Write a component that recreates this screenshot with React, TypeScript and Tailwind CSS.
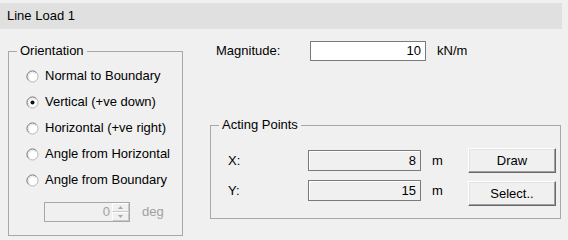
import { type ReactNode } from 'react';

const ORIENTATIONS = [
  'Normal to Boundary',
  'Vertical (+ve down)',
  'Horizontal (+ve right)',
  'Angle from Horizontal',
  'Angle from Boundary',
];

function Radio({ checked, label }: { checked?: boolean; label: string }) {
  return (
    <div className="flex h-[26px] items-center">
      <svg width="13" height="13" viewBox="0 0 13 13" className="ml-[17px] shrink-0">
        <circle cx="6.5" cy="6.5" r="5.5" fill="#ffffff" stroke="#b4b4b4" strokeWidth="1" />
        {/* darker shading on the upper-left half of the ring */}
        <path d="M2.6 10.4 A5.5 5.5 0 0 1 10.4 2.6" fill="none" stroke="#8a8a8a" strokeWidth="1" />
        <path d="M3.4 9.6 A4.4 4.4 0 0 1 9.6 3.4" fill="none" stroke="#e2e2e2" strokeWidth="1" />
        {checked && <circle cx="6.5" cy="6.5" r="2" fill="#111111" />}
      </svg>
      <span className="ml-[6px]">{label}</span>
    </div>
  );
}

function GroupBox({ title, className, children }: { title: string; className: string; children: ReactNode }) {
  return (
    <fieldset className={`border border-[#a8a8a8] ${className}`}>
      <legend className="ml-[8px] px-[3px] leading-[14px]">{title}</legend>
      {children}
    </fieldset>
  );
}

function Field({ value, readOnly }: { value: string; readOnly?: boolean }) {
  return (
    <div
      className={`flex h-[21px] w-[113px] items-center justify-end border border-[#7a7a7a] pr-[4px] shadow-[inset_1px_1px_0_#ffffff] ${
        readOnly ? 'bg-[#f0f0f0]' : 'bg-white'
      }`}
    >
      {value}
    </div>
  );
}

function WinButton({ children }: { children: ReactNode }) {
  return (
    <button className="flex h-[25px] w-[88px] items-center justify-center border border-t-white border-l-white border-r-[#696969] border-b-[#696969] bg-[#f0f0f0] shadow-[inset_-1px_-1px_0_#a0a0a0,inset_1px_1px_0_#e3e3e3]">
      {children}
    </button>
  );
}

export default function App() {
  return (
    <div className="h-[240px] w-[568px] overflow-hidden bg-[#f0f0f0] pt-[3px] font-['Liberation_Sans',Arial,sans-serif] text-[13px] text-black">
      <div className="flex h-[26px] w-[562px] items-center bg-[#e0e0e0] pl-[7px]">Line Load 1</div>

      <div className="flex items-start pl-[8px]">
        <GroupBox title="Orientation" className="mt-[15px] h-[192px] w-[175px]">
          <div className="pt-[5px]">
            {ORIENTATIONS.map((o) => (
              <Radio key={o} label={o} checked={o === 'Vertical (+ve down)'} />
            ))}
          </div>
          <div className="ml-[35px] mt-[9px] flex items-center">
            <div className="flex h-[20px] w-[86px] border border-[#a8a8a8] bg-[#f0f0f0]">
              <div className="flex flex-1 items-center justify-end pr-[2px] text-[#a0a0a0]">0</div>
              <div className="flex w-[17px] flex-col">
                <div className="flex flex-1 items-center justify-center border border-b-[#c8c8c8] border-l-white border-r-[#c8c8c8] border-t-white">
                  <svg width="5" height="3" viewBox="0 0 5 3">
                    <path d="M0 3 L2.5 0 L5 3 Z" fill="#a8a8a8" />
                  </svg>
                </div>
                <div className="flex flex-1 items-center justify-center border border-b-[#c8c8c8] border-l-white border-r-[#c8c8c8] border-t-white">
                  <svg width="5" height="3" viewBox="0 0 5 3">
                    <path d="M0 0 L2.5 3 L5 0 Z" fill="#a8a8a8" />
                  </svg>
                </div>
              </div>
            </div>
            <span className="ml-[12px] text-[#a0a0a0]">deg</span>
          </div>
        </GroupBox>

        <div className="ml-[27px] mt-[12px] flex flex-col">
          <div className="flex h-[20px] items-center">
            <span className="ml-[6px] w-[94px]">Magnitude:</span>
            <div className="flex h-[20px] w-[116px] items-center justify-end border border-[#7a7a7a] bg-white pr-[4px]">10</div>
            <span className="ml-[11px]">kN/m</span>
          </div>

          <GroupBox title="Acting Points" className="mt-[57px] h-[101px] w-[351px]">
            <div className="flex items-start">
              <div className="mt-[18px] flex flex-col gap-[9px] pl-[17px]">
                <div className="flex items-center">
                  <span className="w-[80px]">X:</span>
                  <Field value="8" readOnly />
                  <span className="ml-[11px] w-[36px]">m</span>
                </div>
                <div className="flex items-center">
                  <span className="w-[80px]">Y:</span>
                  <Field value="15" readOnly />
                  <span className="ml-[11px] w-[36px]">m</span>
                </div>
              </div>
              <div className="mt-[16px] flex flex-col gap-[8px]">
                <WinButton>Draw</WinButton>
                <WinButton>Select..</WinButton>
              </div>
            </div>
          </GroupBox>
        </div>
      </div>
    </div>
  );
}
